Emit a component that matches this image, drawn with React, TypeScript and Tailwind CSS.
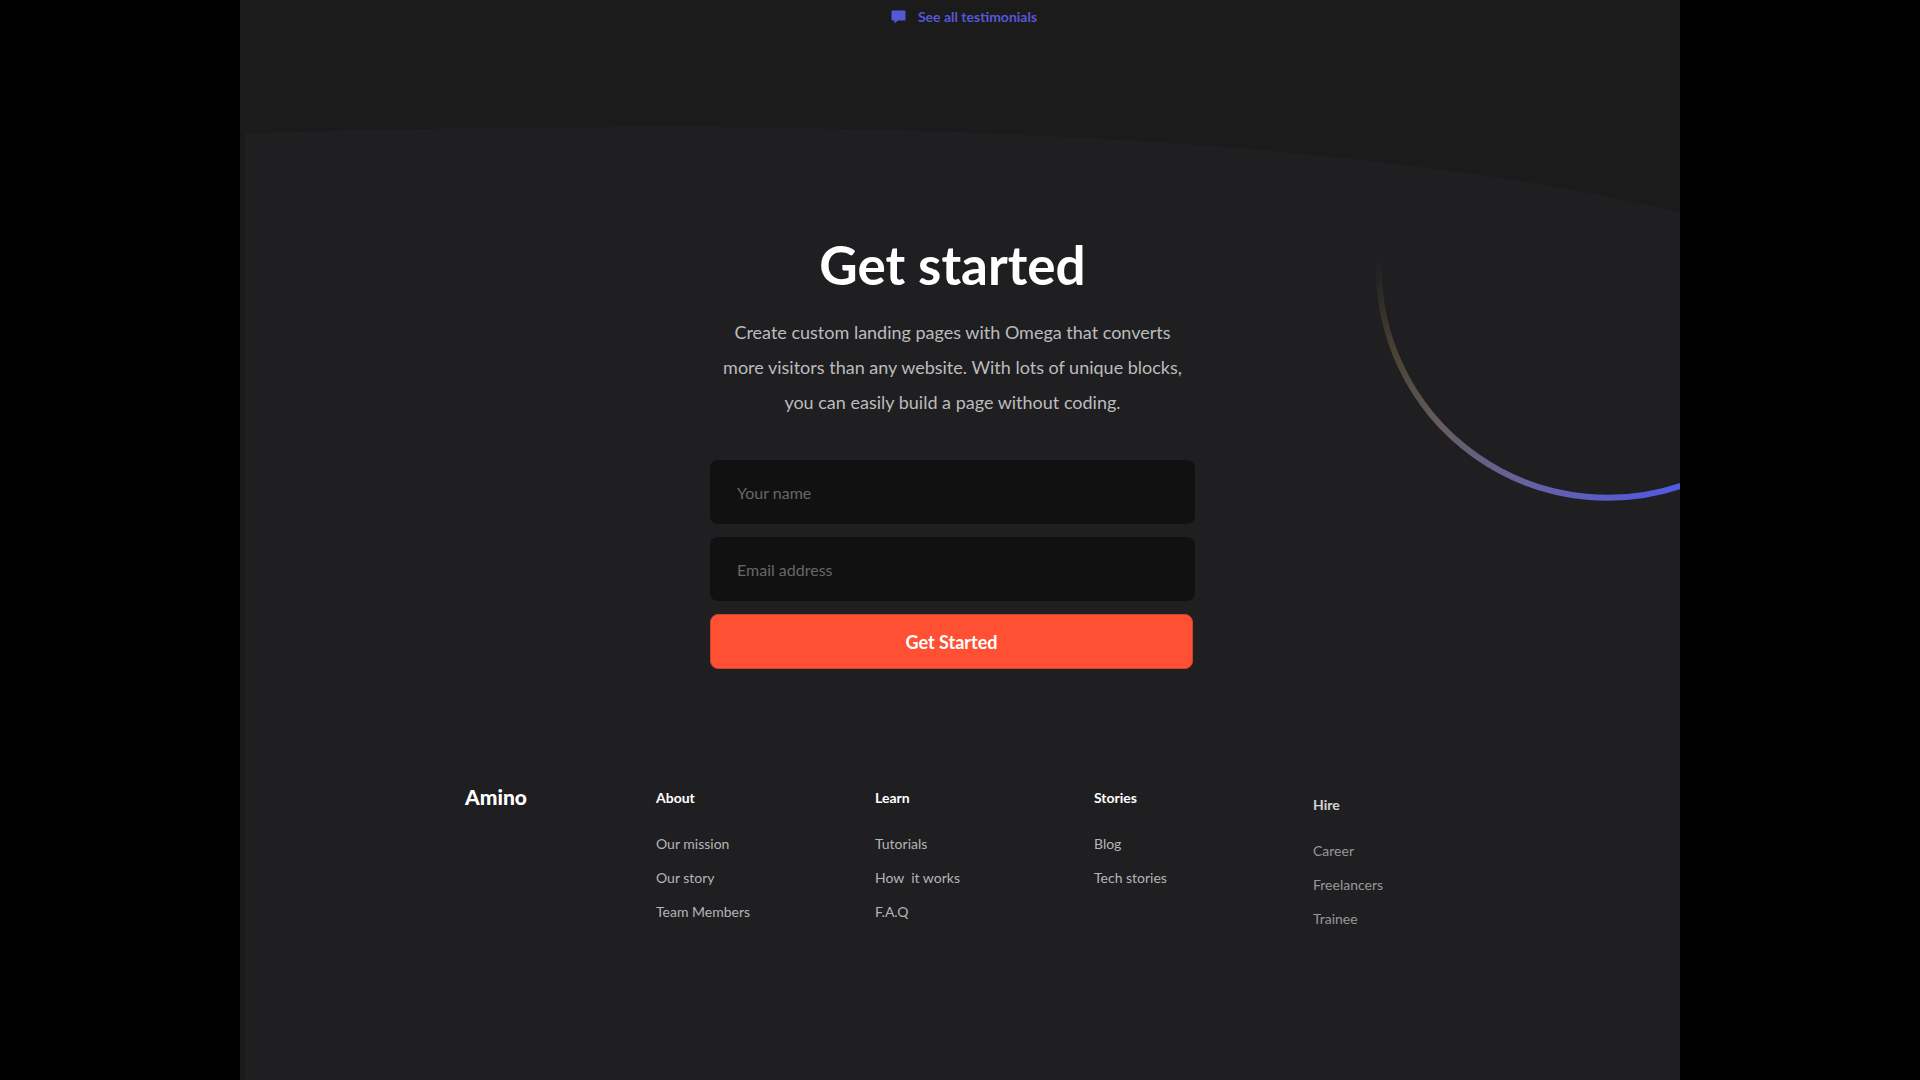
const columns = [
  { title: "About", links: ["Our mission", "Our story", "Team Members"] },
  { title: "Learn", links: ["Tutorials", "How\u00a0 it works", "F.A.Q"] },
  { title: "Stories", links: ["Blog", "Tech stories"] },
  { title: "Hire", links: ["Career", "Freelancers", "Trainee"], className: "pt-[7px] opacity-80" },
];

function CurvedBackdrop() {
  return (
    <div className="pointer-events-none absolute inset-x-0 top-[127px] bottom-0 flex flex-col pl-[5px]" aria-hidden="true">
      <svg className="block h-[86px] w-full shrink-0" viewBox="0 0 1435 86" preserveAspectRatio="none">
        <path d="M0 6.500C150 1 300 0 430 0C690 0 1150 14 1435 86V86H0Z" fill="#1f1f21" />
      </svg>
      <div className="grow bg-[#1f1f21]" />
    </div>
  );
}

function Ring() {
  return (
    <svg
      className="pointer-events-none absolute top-[250px] right-0"
      width="310"
      height="256"
      viewBox="1370 250 310 256"
      fill="none"
      aria-hidden="true"
    >
      <defs>
        <linearGradient id="ring" gradientUnits="userSpaceOnUse" x1="1376" y1="262" x2="1680" y2="485">
          <stop offset="0" stopColor="#1f1f21" />
          <stop offset="0.18" stopColor="#4a4233" />
          <stop offset="0.39" stopColor="#655d5f" />
          <stop offset="0.65" stopColor="#68629c" />
          <stop offset="0.87" stopColor="#5a5cc8" />
          <stop offset="1" stopColor="#515ae4" />
        </linearGradient>
      </defs>
      <path d="M1379 262A229 229 0 0 0 1690 482.500" stroke="url(#ring)" strokeWidth="6" />
    </svg>
  );
}

export default function App() {
  return (
    <div className="min-h-screen bg-black font-['Lato',sans-serif]">
      <div className="relative mx-auto flex min-h-screen w-3/4 flex-col overflow-hidden bg-[#1b1b1c]">
        <CurvedBackdrop />
        <Ring />

        <div className="relative flex justify-center pt-[5px] pl-2">
          <a href="#testimonials" className="flex items-center gap-3 text-sm leading-6 font-bold text-[#5558d6]">
            <svg width="15" height="14" viewBox="0 0 15 14" fill="currentColor" aria-hidden="true">
              <path d="M1.500 0.500H13.500A1 1 0 0 1 14.500 1.500V9.500A1 1 0 0 1 13.500 10.500H7L3.500 13.500V10.500H1.500A1 1 0 0 1 0.500 9.500V1.500A1 1 0 0 1 1.500 0.500Z" />
            </svg>
            See all testimonials
          </a>
        </div>

        <main className="relative flex flex-col items-center pt-[204px] pr-[15px]">
          <h1 className="text-center text-[53px] leading-[64px] font-bold text-white">Get started</h1>
          <p className="mt-[18px] text-center text-lg leading-[35px] text-[#bcbcbd]">
            Create custom landing pages with Omega that converts
            <br />
            more visitors than any website. With lots of unique blocks,
            <br />
            you can easily build a page without coding.
          </p>
          <form className="mt-10 flex w-full max-w-[485px] flex-col gap-[13px]" onSubmit={(e) => e.preventDefault()}>
            <input
              type="text"
              aria-label="Your name"
              placeholder="Your name"
              className="h-16 rounded-lg bg-[#111111] px-[27px] text-base text-white outline-none placeholder:text-[#67676a]"
            />
            <input
              type="email"
              aria-label="Email address"
              placeholder="Email address"
              className="h-16 rounded-lg bg-[#111111] px-[27px] text-base text-white outline-none placeholder:text-[#67676a]"
            />
            <button
              type="submit"
              className="mr-0.5 h-[55px] rounded-lg border border-[#c9432d] bg-[#ff5033] text-lg font-bold text-white"
            >
              Get Started
            </button>
          </form>
        </main>

        <footer className="relative mt-[112px] grid grid-cols-[191px_repeat(4,219px)] pl-[225px]">
          <a href="#home" className="text-[21px] leading-8 font-black text-white">
            Amino
          </a>
          {columns.map((column) => (
            <nav key={column.title} aria-label={column.title} className={column.className}>
              <h2 className="text-sm leading-[34px] font-bold text-white">{column.title}</h2>
              <ul className="mt-3">
                {column.links.map((link) => (
                  <li key={link}>
                    <a href="#footer" className="text-sm leading-[34px] text-[#b5b5b6]">
                      {link}
                    </a>
                  </li>
                ))}
              </ul>
            </nav>
          ))}
        </footer>
      </div>
    </div>
  );
}
